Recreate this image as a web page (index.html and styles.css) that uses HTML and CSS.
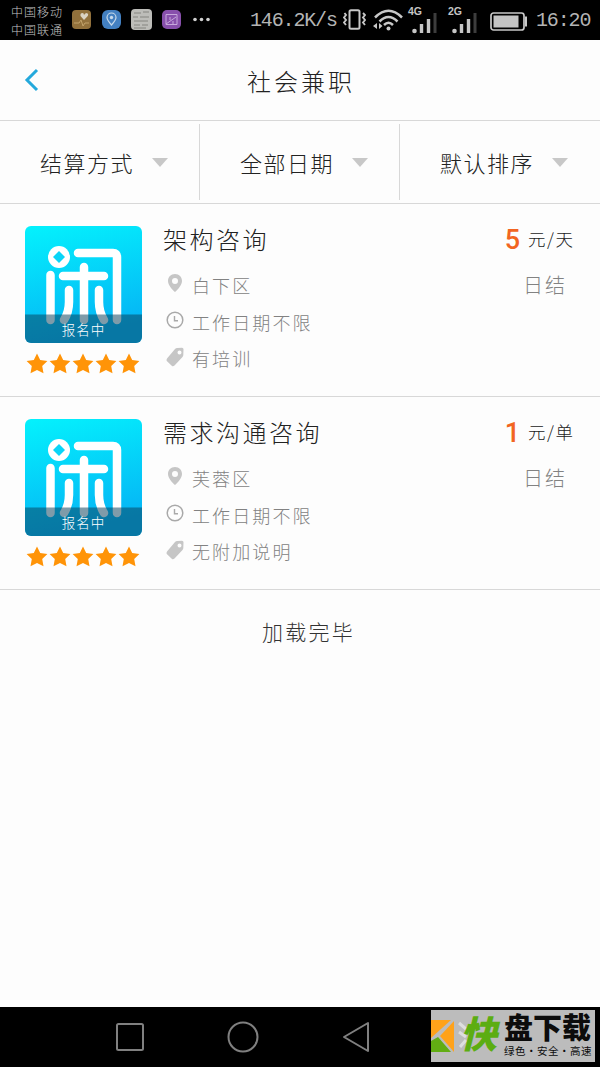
FILE: index.html
```
<!DOCTYPE html>
<html lang="zh-CN">
<head>
<meta charset="utf-8">
<title>社会兼职</title>
<link rel="stylesheet" href="styles.css">
</head>
<body>
<svg class="defs" width="0" height="0" aria-hidden="true">
  <defs>
    <linearGradient id="sky" x1="0" y1="0" x2="0.25" y2="1"><stop offset="0" stop-color="#04f2fd"/><stop offset="1" stop-color="#05b5f5"/></linearGradient>
    <symbol id="logo" viewBox="0 0 117 117">
      <rect width="117" height="117" fill="url(#sky)"/>
      <path d="M25.500 49V94M53 27H88Q92 27 92 31V94M38 50H79M59 41V94M44 64V76Q44 86 39 94M74 64V76Q74 86 79 94" fill="none" stroke="#fff" stroke-width="8.500" stroke-linecap="round" stroke-linejoin="round"/>
      <circle cx="34" cy="31" r="11" fill="#fff"/>
      <path d="M34 25L40 31L34 37L28 31Z" fill="#08d5f8"/>
      <rect y="88.500" width="117" height="28.500" fill="#09405a" fill-opacity=".52"/>
    </symbol>
    <symbol id="star" viewBox="0 0 22 21"><path d="M11 .6L14.200 7.100L21.400 8.100L16.200 13.100L17.500 20.300L11 16.900L4.500 20.300L5.800 13.100L.6 8.100L7.800 7.100Z" fill="#ff9408"/></symbol>
    <symbol id="stars" viewBox="0 0 114 21">
      <use href="#star" x="0" y="0" width="22" height="21"/><use href="#star" x="23" y="0" width="22" height="21"/><use href="#star" x="46" y="0" width="22" height="21"/><use href="#star" x="69" y="0" width="22" height="21"/><use href="#star" x="92" y="0" width="22" height="21"/>
    </symbol>
    <symbol id="pin" viewBox="0 0 18 20"><path fill-rule="evenodd" d="M9 1C4.800 1 2 4 2 8C2 12 6 16.500 9 19C12 16.500 16 12 16 8C16 4 13.200 1 9 1ZM9 5A3 3 0 1 1 9 11A3 3 0 1 1 9 5Z" fill="#c6c6c6"/></symbol>
    <symbol id="clock" viewBox="0 0 18 20"><circle cx="9" cy="10" r="7.800" fill="none" stroke="#a9a9a9" stroke-width="1.500"/><path d="M8.500 6V10.700H12" fill="none" stroke="#a9a9a9" stroke-width="1.400"/></symbol>
    <symbol id="tag" viewBox="0 0 18 20"><path fill-rule="evenodd" d="M9 2Q10 1 11 1L16 .8Q17.500 .8 17.500 2.300L17.300 8Q17.300 9 16.500 10L8.500 18.500Q7.200 19.800 6 19L.8 14Q0 13 1 11.500ZM13.500 3.500A2 2 0 1 0 13.500 7.500A2 2 0 1 0 13.500 3.500Z" fill="#c6c6c6"/></symbol>
    <symbol id="signal" viewBox="0 0 26 22"><circle cx="2.500" cy="19" r="2.300" fill="#c6c6c6"/><path d="M9.500 12V21M16.500 7V21" stroke="#c6c6c6" stroke-width="3.400"/><path d="M23 1V21" stroke="#3d3d3d" stroke-width="3"/></symbol>
  </defs>
</svg>
<div class="screen">
  <div class="status">
    <div class="carriers"><span>中国移动</span><span>中国联通</span></div>
    <svg class="apps" width="140" height="22" viewBox="0 0 140 22">
      <rect x="0" y="1" width="19" height="19" rx="4" fill="#92713c"/>
      <path d="M2 14H7L9 11L11 17L13 14H17" fill="none" stroke="#c2a36b"/>
      <path d="M12 11L8.500 7Q8 4 10.500 4Q12 4 12 6Q13 4 15 4Q17 5 15.800 7Z" fill="#dbd3c3"/>
      <rect x="30" y="1" width="19" height="19" rx="6" fill="#4380c1"/>
      <path d="M39.500 16Q35 11 35 8.500A4.500 4.500 0 0 1 44 8.500Q44 11 39.500 16Z" fill="none" stroke="#c7d9ea" stroke-width="1.200"/><circle cx="39.500" cy="8.500" r="1.700" fill="#c7d9ea"/>
      <rect x="59" y="0" width="21" height="21" rx="4" fill="#bdbdb9"/>
      <path d="M62 4H69M71 3H77M61 8H66M68 8H77M62 12H76M62 16H68M70 16H76M62 19H74" stroke="#858580" stroke-width="1"/>
      <rect x="90" y="1" width="19" height="19" rx="5" fill="#8850ac"/>
      <path d="M94 5.500H105V15.500H94ZM94 15L104 8M98 8V11M101 12V15" fill="none" stroke="#c7a8dc"/>
      <g fill="#d0d0d0"><circle cx="123" cy="10.500" r="1.800"/><circle cx="129.500" cy="10.500" r="1.800"/><circle cx="136" cy="10.500" r="1.800"/></g>
    </svg>
    <span class="speed">146.2K/s</span>
    <svg class="vibrate" width="23" height="22" viewBox="0 0 23 22" fill="none" stroke="#c8c8c8"><rect x="6.500" y="1.200" width="10" height="18.500" rx="1.500" stroke-width="2"/><path d="M1.500 4L3 6L1 8.500L3 11L1 13.500L3 16M20 4L22 6L20 8.500L22 11L20 13.500L22 16" stroke-width="1.900"/></svg>
    <svg class="wifi" width="30" height="22" viewBox="0 0 30 22" fill="none" stroke="#c8c8c8" stroke-width="2.500"><path d="M2 8.500Q15.500 -5 29 8.500M6.500 12.500Q15.500 3.500 24.500 12.500M11 16Q15.500 11.500 20 16"/><circle cx="15.500" cy="19.500" r="2" fill="#c8c8c8" stroke="none"/><path d="M4 14V20L0 17ZM6 14V20L9.500 17Z" fill="#c8c8c8" stroke="none"/></svg>
    <div class="network"><span>4G</span><svg width="26" height="22"><use href="#signal"/></svg></div>
    <div class="network second"><span>2G</span><svg width="26" height="22"><use href="#signal"/></svg></div>
    <svg class="battery" width="38" height="19" viewBox="0 0 38 19"><rect x="1" y="1" width="33" height="17" rx="2.500" fill="none" stroke="#c8c8c8" stroke-width="1.700"/><rect x="3.500" y="3.500" width="25" height="12" fill="#c4c4c4"/><path d="M35 4.500H37V14.500H35Z" fill="#c8c8c8"/></svg>
    <span class="time">16:20</span>
  </div>

  <header class="header">
    <svg class="back" width="15" height="24" viewBox="0 0 15 24"><path d="M13 2L3 12L13 22" fill="none" stroke="#24a9dc" stroke-width="3"/></svg>
    <h1>社会兼职</h1>
  </header>

  <nav class="filters">
    <div class="filter"><span>结算方式</span><i class="caret"></i></div>
    <div class="filter"><span>全部日期</span><i class="caret"></i></div>
    <div class="filter"><span>默认排序</span><i class="caret"></i></div>
  </nav>

  <main class="list">
    <article class="job">
      <div class="aside">
        <div class="cover"><svg width="117" height="117"><use href="#logo"/></svg><span class="badge">报名中</span></div>
        <svg class="rating" width="114" height="21"><use href="#stars"/></svg>
      </div>
      <div class="info">
        <h2>架构咨询</h2>
        <p class="place"><svg width="18" height="20"><use href="#pin"/></svg><span>白下区</span></p>
        <p class="date"><svg width="18" height="20"><use href="#clock"/></svg><span>工作日期不限</span></p>
        <p class="note"><svg width="18" height="20"><use href="#tag"/></svg><span>有培训</span></p>
      </div>
      <div class="pay">
        <div class="price"><strong>5</strong><span>元/天</span></div>
        <div class="settle">日结</div>
      </div>
    </article>
    <article class="job">
      <div class="aside">
        <div class="cover"><svg width="117" height="117"><use href="#logo"/></svg><span class="badge">报名中</span></div>
        <svg class="rating" width="114" height="21"><use href="#stars"/></svg>
      </div>
      <div class="info">
        <h2>需求沟通咨询</h2>
        <p class="place"><svg width="18" height="20"><use href="#pin"/></svg><span>芙蓉区</span></p>
        <p class="date"><svg width="18" height="20"><use href="#clock"/></svg><span>工作日期不限</span></p>
        <p class="note"><svg width="18" height="20"><use href="#tag"/></svg><span>无附加说明</span></p>
      </div>
      <div class="pay">
        <div class="price"><strong>1</strong><span>元/单</span></div>
        <div class="settle">日结</div>
      </div>
    </article>
    <p class="end">加载完毕</p>
  </main>

  <footer class="keys">
    <svg width="28" height="28" viewBox="0 0 28 28"><rect x="1" y="1" width="26" height="26" rx="1.500"/></svg>
    <svg width="32" height="32" viewBox="0 0 32 32"><circle cx="16" cy="16" r="14.500"/></svg>
    <svg width="28" height="32" viewBox="0 0 28 32"><path d="M26 2V30L2 16Z" stroke-linejoin="round"/></svg>
    <div class="mark">
      <svg width="30" height="52" viewBox="0 0 30 52"><path d="M0 10H20L0 28Z" fill="#ffa21a"/><path d="M23 11V42L9 26Z" fill="#ffa21a"/><path d="M0 31L7 27L20 42H0Z" fill="#62ad13"/></svg>
      <svg class="trace" width="10" height="30" viewBox="0 0 10 30"><path d="M1 3L8 9M1 12L8 17M8 20L2 27" stroke="#dedede" stroke-width="3"/></svg>
      <span class="fast">快</span>
      <div class="words"><b>盘下载</b><small>绿色·安全·高速</small></div>
    </div>
  </footer>
</div>
</body>
</html>
```
FILE: styles.css
```
* { box-sizing: border-box; }
body { margin: 0; background: #fdfdfd; font-family: "Noto Sans CJK SC", sans-serif; font-weight: 300; color: #222; }
h1, h2, p { margin: 0; font-weight: 300; }
svg { display: block; flex: none; }
.defs { position: absolute; }
.screen { width: 600px; height: 1067px; display: flex; flex-direction: column; overflow: hidden; white-space: nowrap; }

.status { height: 40px; flex: none; background: #000; color: #c4c4c4; display: flex; align-items: center; padding-left: 11px; }
.carriers { width: 61px; display: flex; flex-direction: column; font-size: 12px; line-height: 18px; letter-spacing: 1px; padding-top: 1px; }
.speed, .time { font-family: "Liberation Mono", monospace; font-size: 20px; line-height: 22px; font-weight: 400; color: #b4b4b4; letter-spacing: -1.150px; padding-top: 2px; }
.speed { width: 93px; margin-left: 38px; }
.wifi { margin-left: 7px; }
.network { width: 27px; height: 30px; margin-left: 7px; display: flex; flex-direction: column; font: bold 10.500px/10px "Liberation Sans", sans-serif; }
.network span { height: 5px; margin: 1px 0 0 -2px; }
.network svg { margin: 1px 0 0 2px; }
.network.second { margin-left: 13px; }
.battery { margin: 2px 0 0 13px; }
.time { margin-left: 8px; }

.header { height: 81px; flex: none; border-bottom: 1px solid #d8d8d8; display: flex; align-items: center; padding-left: 24px; }
.header h1 { margin-left: 208px; padding-top: 1px; font-size: 24px; line-height: 30px; letter-spacing: 3px; }

.filters { height: 83px; flex: none; display: grid; grid-template-columns: repeat(3, 200px); border-bottom: 1px solid #d8d8d8; padding: 3px 0; }
.filter { display: flex; align-items: center; padding-left: 40px; border-right: 1px solid #d8d8d8; font-size: 22px; letter-spacing: 1.500px; }
.filter:last-child { border-right: 0; }
.filter span { width: 112px; }
.caret { border: 8px solid transparent; border-top: 9px solid #c8c8c8; border-bottom: 0; }

.list { flex: 1; }
.job { height: 193px; border-bottom: 1px solid #d8d8d8; display: grid; grid-template-columns: 117px 1fr 100px; column-gap: 22px; padding: 22px 25px 0; }
.cover { position: relative; height: 117px; border-radius: 6px; overflow: hidden; }
.badge { position: absolute; inset: auto 0 0; text-align: center; color: #fff; font-size: 13.500px; line-height: 27px; letter-spacing: 1px; }
.rating { margin: 10px 0 0 1px; }
.info h2 { margin: -1px 0 0 -1px; font-size: 24px; line-height: 28px; letter-spacing: 2.500px; }
.info p { display: flex; gap: 8px; padding-left: 2px; height: 20px; line-height: 22px; font-size: 18px; letter-spacing: 2.100px; color: #828282; }
.info .place { margin-top: 20px; }
.info .date { margin-top: 18px; }
.info .note { margin-top: 16px; }
.info .date svg { margin-top: -1px; }
.info .place span { padding-top: 1px; }
.pay { display: flex; flex-direction: column; align-items: flex-end; }
.price { height: 25px; display: flex; align-items: center; gap: 8px; }
.price strong { font: 500 27px/28px Roboto, sans-serif; padding-top: 2px; color: #f26522; }
.price span { width: 47px; font-size: 17.500px; letter-spacing: 1.500px; }
.settle { margin: 20px 8px 0 0; font-size: 20px; line-height: 28px; letter-spacing: 2px; color: #828282; }
.end { text-align: center; padding: 26px 0 0 17px; font-size: 21px; line-height: 30px; letter-spacing: 2.200px; color: #333; }

.keys { position: relative; height: 60px; flex: none; background: #000; display: flex; align-items: center; gap: 83px; padding-left: 116px; fill: none; stroke: #808080; stroke-width: 2; }
.mark { position: absolute; left: 431px; top: 3px; width: 164px; height: 52px; background: #bcbcbc; display: flex; stroke: none; color: #0c0c0c; }
.trace { margin: 10px 0 0 -3px; }
.fast { width: 44px; margin-left: -8px; font-size: 37px; line-height: 45px; font-weight: 900; font-style: italic; color: #5cad12; }
.words { display: flex; flex-direction: column; gap: 4px; }
.words b { height: 30px; font-size: 29px; line-height: 30px; font-weight: 900; padding-top: 1px; }
.words small { font-size: 10.500px; line-height: 14px; font-weight: 400; letter-spacing: .5px; }
```
